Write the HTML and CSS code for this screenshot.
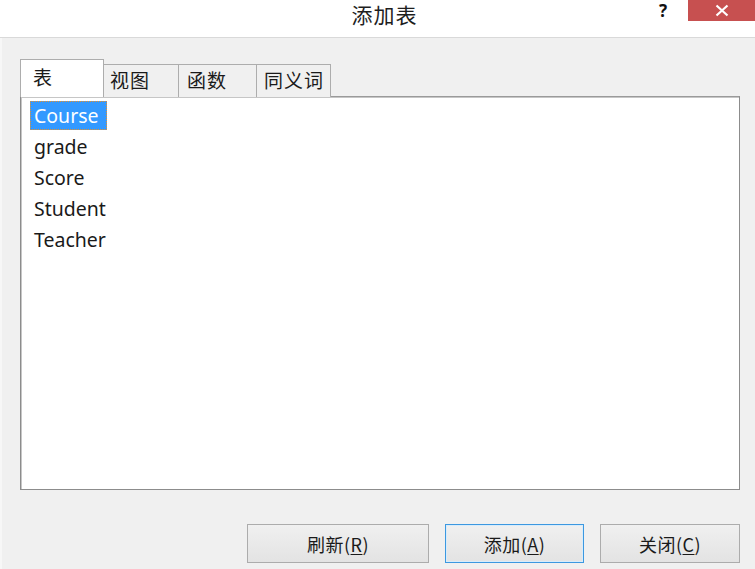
FILE: index.html
```html
<!DOCTYPE html>
<html lang="zh-CN">
<head>
<meta charset="utf-8">
<title>添加表</title>
<link rel="stylesheet" href="styles.css">
</head>
<body>
<div class="dialog">
  <header class="titlebar">
    <div class="title">添加表</div>
    <div class="help">?</div>
    <div class="close">
      <svg width="16" height="13" viewBox="0 0 16 13"><path d="M2.5 1.5 L13.5 11.5 M13.5 1.5 L2.5 11.5" stroke="#fff" stroke-width="2.2" fill="none"/></svg>
    </div>
  </header>
  <main class="body">
    <div class="tabs">
      <div class="tab active">表</div>
      <div class="tab t2">视图</div>
      <div class="tab t3">函数</div>
      <div class="tab t4">同义词</div>
    </div>
    <div class="pane">
      <ul class="list">
        <li class="item selected"><span>Course</span></li>
        <li class="item"><span>grade</span></li>
        <li class="item"><span>Score</span></li>
        <li class="item"><span>Student</span></li>
        <li class="item"><span>Teacher</span></li>
      </ul>
    </div>
    <div class="buttons">
      <button class="btn b1">刷新(<u>R</u>)</button>
      <button class="btn b2 default">添加(<u>A</u>)</button>
      <button class="btn b3">关闭(<u>C</u>)</button>
    </div>
  </main>
</div>
</body>
</html>
```
FILE: styles.css
```css
* { box-sizing: border-box; }
html, body { margin: 0; padding: 0; }
body {
  width: 755px;
  height: 569px;
  overflow: hidden;
  background: #f0f0f0;
  font-family: "Noto Sans", "Noto Sans CJK SC", sans-serif;
  color: #1a1a1a;
}
.dialog { width: 755px; height: 569px; display: flex; flex-direction: column; }
.titlebar {
  height: 38px;
  background: #ffffff;
  border-bottom: 1px solid #d9d9d9;
  position: relative;
  display: flex;
  justify-content: center;
}
.title {
  font-family: "Noto Sans CJK SC", sans-serif;
  font-size: 21px;
  letter-spacing: 1px;
  line-height: 28px;
  color: #1e1e1e;
  margin-left: 14px;
}
.help {
  position: absolute;
  left: 659px;
  top: 1px;
  font-family: "Noto Sans", sans-serif;
  font-weight: bold;
  font-size: 17px;
  line-height: 20px;
  color: #111;
}
.close {
  position: absolute;
  right: 0;
  top: 0;
  width: 67px;
  height: 21px;
  background: #c75050;
  display: flex;
  align-items: center;
  justify-content: center;
}
.body {
  flex: 1;
  padding: 21px 15px 0 18px;
  border-left: 2px solid #f7f7f7;
  display: flex;
  flex-direction: column;
}
.tabs {
  display: flex;
  align-items: flex-end;
  height: 38px;
  position: relative;
  z-index: 1;
  margin-bottom: -1px;
}
.tab {
  font-family: "Noto Sans CJK SC", sans-serif;
  font-size: 19px;
  letter-spacing: 1px;
  height: 33px;
  line-height: 30px;
  padding-left: 8px;
  border: 1px solid #adadad;
  border-bottom: none;
  border-left: none;
  background: #f0f0f0;
  color: #1a1a1a;
}
.tab.active {
  height: 38px;
  width: 84px;
  background: #ffffff;
  border-left: 1px solid #adadad;
  padding-left: 12px;
  line-height: 34px;
}
.t2 { width: 75px; padding-left: 6px; }
.t3 { width: 78px; padding-left: 8px; }
.t4 { width: 74px; padding-left: 7px; }
.pane {
  height: 394px;
  background: #ffffff;
  border: 1px solid #8c8c8c;
  border-top-color: #9a9a9a;
  box-shadow: inset 1px 1px 0 #c6c6c6;
  padding: 4px 0 0 9px;
}
.list { list-style: none; margin: 0; padding: 0; }
.item {
  height: 31px;
  font-size: 19.5px;
  line-height: 29px;
  color: #1a1a1a;
}
.item span { display: inline-block; padding: 0 8px 0 4px; height: 29px; }
.item.selected span {
  background: #3399ff;
  color: #ffffff;
  outline: 1px dotted #e8912c;
  outline-offset: -1px;
}
.buttons {
  display: flex;
  justify-content: flex-end;
  gap: 16px;
  margin-top: 34px;
}
.btn {
  font-family: "Noto Sans CJK SC", sans-serif;
  font-size: 18px;
  letter-spacing: 0.5px;
  height: 39px;
  width: 140px;
  background: linear-gradient(#f0f0f0, #e3e3e3);
  border: 1px solid #acacac;
  color: #1a1a1a;
  padding: 0;
}
.b1 { width: 182px; }
.b2 { width: 139px; }
.btn.default { border: 1px solid #3c98e0; box-shadow: inset 0 0 0 1px #d8ecfb; }
.btn u { text-decoration-thickness: 1px; text-underline-offset: 2px; }
```
